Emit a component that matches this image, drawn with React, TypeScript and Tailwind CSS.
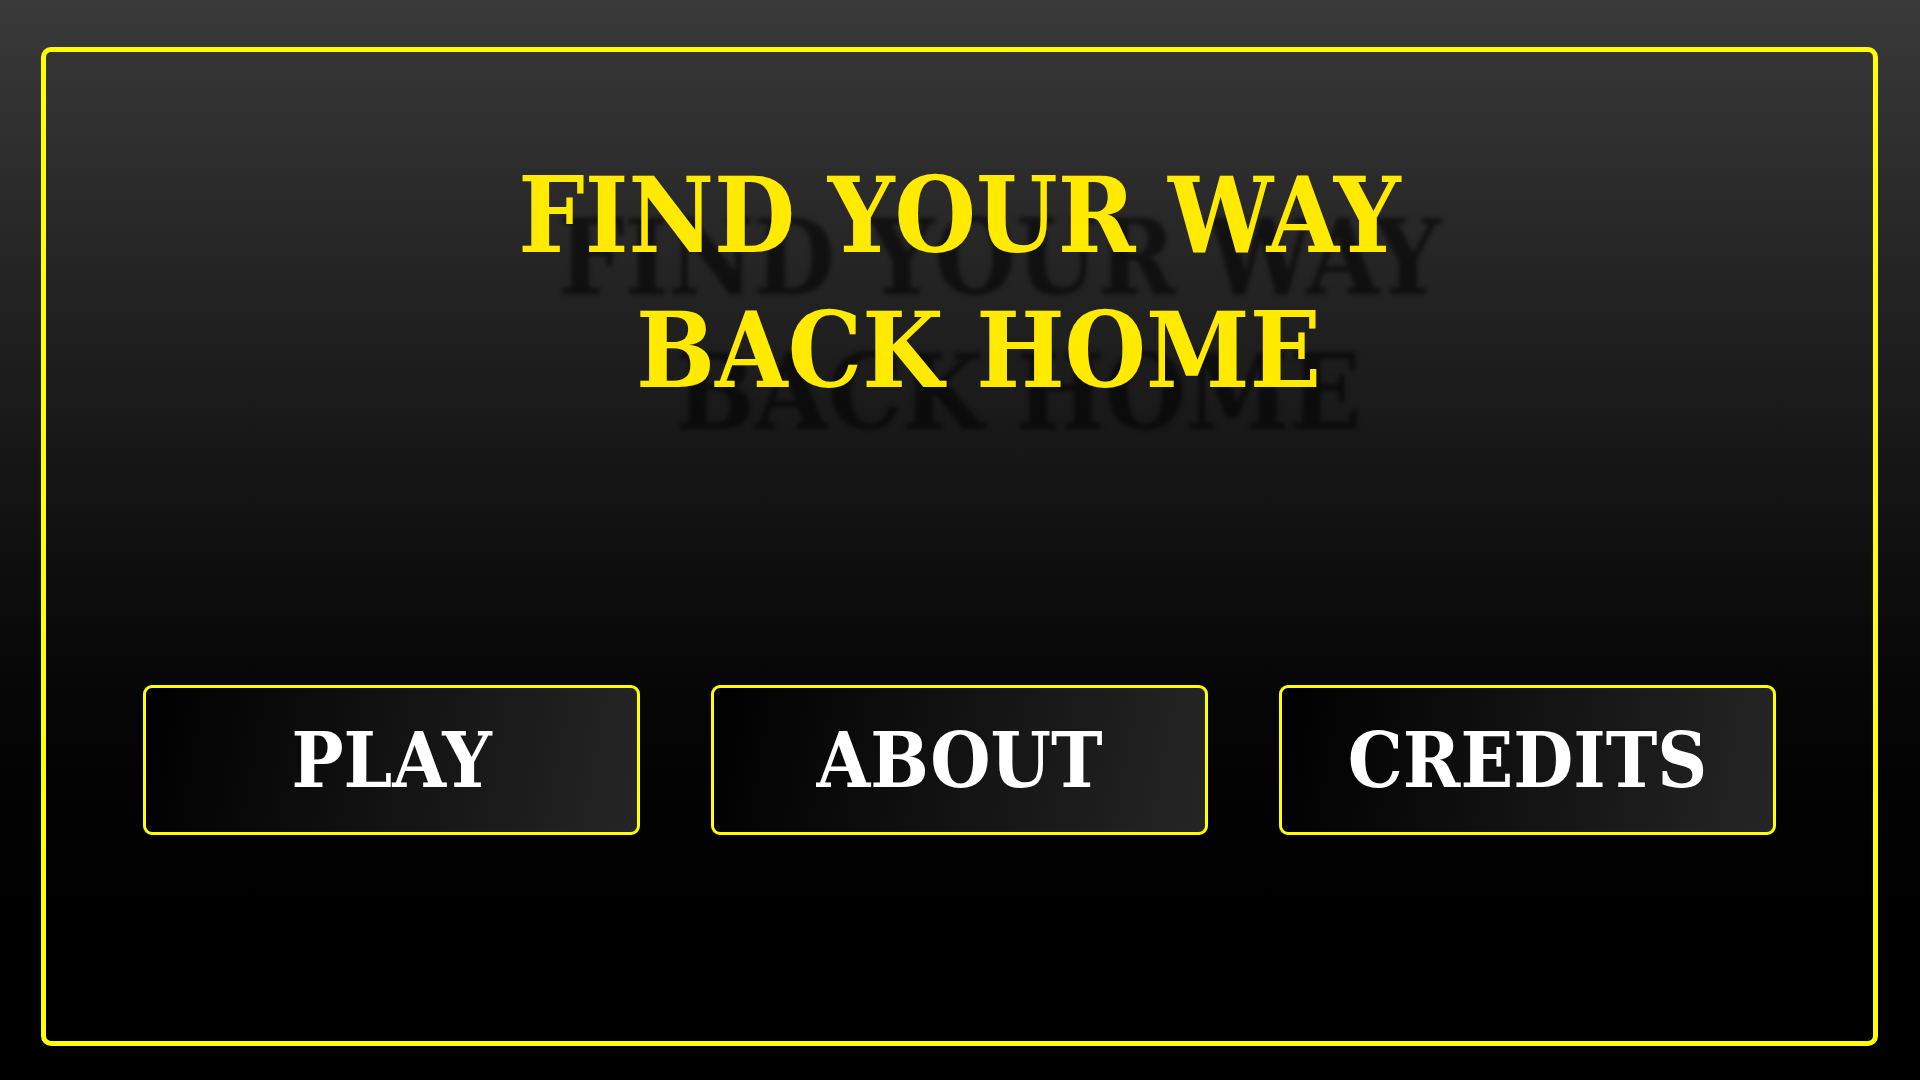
import React from "react";

const serif = {
  fontFamily: '"DejaVu Serif Condensed", "DejaVu Serif", "Liberation Serif", serif',
  fontStretch: "condensed",
};

const MenuButton: React.FC<{ label: string }> = ({ label }) => (
  <button
    className="w-[497px] h-[150px] rounded-[9px] border-[3px] border-[#ffff00] bg-[linear-gradient(100deg,#000_0%,#252525_100%)] text-white font-bold text-[77px] leading-none flex items-center justify-center"
    style={serif}
  >
    {label}
  </button>
);

const App: React.FC = () => {
  const buttons = ["PLAY", "ABOUT", "CREDITS"];

  return (
    <div className="w-full h-screen bg-gradient-to-b from-[#3a3a3a] to-black pt-[47px] pl-[41px] pr-[42px] pb-[34px]">
      <div className="w-full h-full rounded-[10px] border-[5px] border-[#ffff00] flex flex-col items-center">
        <h1
          className="mt-[96px] text-center font-bold text-[104px] leading-[135px] text-[#ffea00] [text-shadow:40px_42px_4px_rgba(0,0,0,0.55)]"
          style={serif}
        >
          <div>FIND YOUR WAY</div>
          <div className="pl-[38px]">BACK HOME</div>
        </h1>

        <div className="mt-[267px] flex gap-[71px]">
          {buttons.map((b) => (
            <MenuButton key={b} label={b} />
          ))}
        </div>
      </div>
    </div>
  );
};

export default App;
